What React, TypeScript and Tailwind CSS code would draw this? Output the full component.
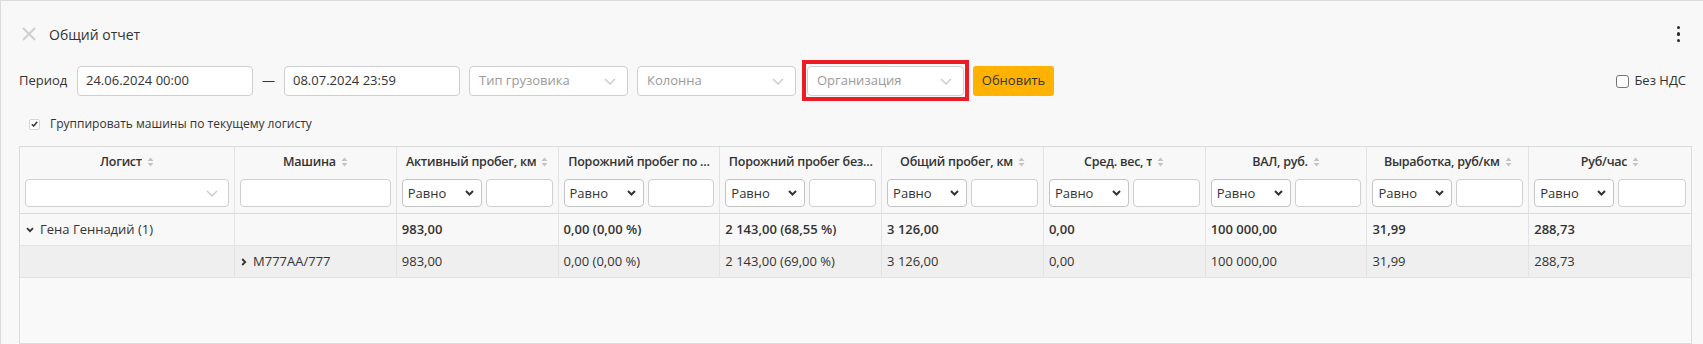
import React from "react";

const GRID = "grid grid-cols-[215px_repeat(9,minmax(0,1fr))]";

type Col = { title: string; sort: boolean; filter: "combo" | "text" | "num" };

const COLUMNS: Col[] = [
  { title: "Логист", sort: true, filter: "combo" },
  { title: "Машина", sort: true, filter: "text" },
  { title: "Активный пробег, км", sort: true, filter: "num" },
  { title: "Порожний пробег по ...", sort: false, filter: "num" },
  { title: "Порожний пробег без...", sort: false, filter: "num" },
  { title: "Общий пробег, км", sort: true, filter: "num" },
  { title: "Сред. вес, т", sort: true, filter: "num" },
  { title: "ВАЛ, руб.", sort: true, filter: "num" },
  { title: "Выработка, руб/км", sort: true, filter: "num" },
  { title: "Руб/час", sort: true, filter: "num" },
];

const VALUES = ["983,00", "0,00 (0,00 %)", "2 143,00 (68,55 %)", "3 126,00", "0,00", "100 000,00", "31,99", "288,73"];
const VALUES_CAR = ["983,00", "0,00 (0,00 %)", "2 143,00 (69,00 %)", "3 126,00", "0,00", "100 000,00", "31,99", "288,73"];

function SortIcon() {
  return (
    <svg width="7" height="10" viewBox="0 0 7 10" className="ml-[5px] shrink-0">
      <path d="M3.5 0.5L6.5 4H0.5Z" fill="#c4c4c4" />
      <path d="M0.5 6H6.5L3.5 9.5Z" fill="#c4c4c4" />
    </svg>
  );
}

function ThinChevron() {
  return (
    <svg width="12" height="7" viewBox="0 0 12 7">
      <path d="M1 1l5 5 5-5" stroke="#c9c9c9" strokeWidth="1.3" fill="none" />
    </svg>
  );
}

function BoldChevron() {
  return (
    <svg width="9" height="6" viewBox="0 0 9 6">
      <path d="M1 1l3.5 3.5L8 1" stroke="#333" strokeWidth="2" fill="none" />
    </svg>
  );
}

function PlaceholderSelect({ label, width }: { label: string; width: string }) {
  return (
    <div className={`${width} h-[30px] flex items-center justify-between bg-white border border-[#cfcfcf] rounded-[4px] pl-[9px] pr-[11px]`}>
      <span className="text-[13px] text-[#9a9a9a]">{label}</span>
      <ThinChevron />
    </div>
  );
}

function HeaderFilter({ kind }: { kind: Col["filter"] }) {
  if (kind === "combo") {
    return (
      <div className="h-[28px] flex items-center justify-end bg-white border border-[#cfcfcf] rounded-[4px] pr-[10px]">
        <ThinChevron />
      </div>
    );
  }
  if (kind === "text") {
    return <div className="h-[28px] bg-white border border-[#cfcfcf] rounded-[4px]" />;
  }
  return (
    <div className="h-[28px] flex gap-[4px]">
      <div className="w-[80px] shrink-0 flex items-center justify-between bg-white border border-[#c4c4c4] rounded-[4px] pl-[5px] pr-[7px]">
        <span className="text-[13px] text-[#333] pt-[2px]">Равно</span>
        <BoldChevron />
      </div>
      <div className="flex-1 min-w-0 bg-white border border-[#cfcfcf] rounded-[4px]" />
    </div>
  );
}

export default function App() {
  return (
    <div className="h-screen overflow-hidden flex flex-col bg-[#f8f8f8] border-t border-l border-[#dcdcdc] text-[#333] font-['Open_Sans',sans-serif]">
      <div className="flex items-center h-[28px] mt-[19px] pl-[21px] pr-[23px]">
        <svg width="14" height="14" viewBox="0 0 14 14">
          <path d="M1 1L13 13M13 1L1 13" stroke="#cfcfcf" strokeWidth="2" />
        </svg>
        <span className="ml-[13px] text-[14px]">Общий отчет</span>
        <div className="ml-auto flex flex-col gap-[3px]">
          <span className="w-[3.5px] h-[3.5px] rounded-full bg-[#2a2a2a]" />
          <span className="w-[3.5px] h-[3.5px] rounded-full bg-[#2a2a2a]" />
          <span className="w-[3.5px] h-[3.5px] rounded-full bg-[#2a2a2a]" />
        </div>
      </div>

      <div className="flex items-center h-[30px] mt-[18px] pl-[18px] pr-[17px]">
        <span className="w-[49px] text-[13px]">Период</span>
        <div className="ml-[9px] w-[176px] h-[30px] flex items-center bg-white border border-[#cfcfcf] rounded-[4px] pl-[8px] text-[13px]">
          24.06.2024 00:00
        </div>
        <span className="w-[31px] text-center text-[13px]">—</span>
        <div className="w-[176px] h-[30px] flex items-center bg-white border border-[#cfcfcf] rounded-[4px] pl-[8px] text-[13px]">
          08.07.2024 23:59
        </div>
        <div className="ml-[9px]">
          <PlaceholderSelect label="Тип грузовика" width="w-[159px]" />
        </div>
        <div className="ml-[9px]">
          <PlaceholderSelect label="Колонна" width="w-[159px]" />
        </div>
        <div className="ml-[11px] relative">
          <PlaceholderSelect label="Организация" width="w-[157px]" />
          <div className="absolute -left-[5px] -right-[5px] -top-[6px] -bottom-[5px] border-[4px] border-[#ed1c24]" />
        </div>
        <button className="ml-[9px] w-[81px] h-[30px] bg-[#ffb300] rounded-[3px] text-[13px] text-[#333]">Обновить</button>
        <label className="ml-auto flex items-center gap-[5px] text-[13px]">
          <span className="w-[13px] h-[13px] bg-white border border-[#767676] rounded-[3px]" />
          Без НДС
        </label>
      </div>

      <div className="flex items-center h-[20px] mt-[18px] pl-[28px]">
        <span className="w-[11px] h-[11px] flex items-center justify-center bg-white border border-[#d6d6d6] rounded-[2px]">
          <svg width="7" height="6" viewBox="0 0 7 6">
            <path d="M0.8 3.2L2.7 5L6.2 0.8" stroke="#333" strokeWidth="1.5" fill="none" />
          </svg>
        </span>
        <span className="ml-[10px] text-[12px]">Группировать машины по текущему логисту</span>
      </div>

      <div className="mt-[12px] ml-[18px] mr-[11px] flex-1 flex flex-col border border-[#dcdcdc] bg-[#f9f9f9]">
        <div className={`${GRID} border-b border-[#dcdcdc] bg-[#f8f8f8]`}>
          {COLUMNS.map((c) => (
            <div key={c.title} className="flex flex-col px-[5px] pt-[4px] pb-[6px] border-r border-[#e3e3e3] last:border-r-0 min-w-0">
              <div className="h-[22px] flex items-center justify-center min-w-0">
                <span className="whitespace-nowrap overflow-hidden text-[12.5px] tracking-[-0.25px] font-semibold text-[#333]">{c.title}</span>
                {c.sort ? <SortIcon /> : null}
              </div>
              <div className="mt-[6px]">
                <HeaderFilter kind={c.filter} />
              </div>
            </div>
          ))}
        </div>

        <div className={`${GRID} h-[32px] border-b border-[#e3e3e3] bg-[#f8f8f8] text-[13px] font-semibold`}>
          <div className="flex items-center pl-[6px] border-r border-[#e3e3e3]">
            <svg width="8" height="6" viewBox="0 0 8 6" className="mr-[6px]">
              <path d="M1 1.2l3 3 3-3" stroke="#333" strokeWidth="1.8" fill="none" />
            </svg>
            <span className="font-normal">Гена Геннадий (1)</span>
          </div>
          <div className="border-r border-[#e3e3e3]" />
          {VALUES.map((v, i) => (
            <div key={i} className="flex items-center pl-[5px] border-r border-[#e3e3e3] last:border-r-0">
              {v}
            </div>
          ))}
        </div>

        <div className={`${GRID} h-[32px] border-b border-[#e3e3e3] bg-[#efefef] text-[13px]`}>
          <div className="border-r border-[#e3e3e3]" />
          <div className="flex items-center pl-[6px] border-r border-[#e3e3e3]">
            <svg width="6" height="8" viewBox="0 0 6 8" className="mr-[6px]">
              <path d="M1.2 1l3 3-3 3" stroke="#333" strokeWidth="1.8" fill="none" />
            </svg>
            <span>M777AA/777</span>
          </div>
          {VALUES_CAR.map((v, i) => (
            <div key={i} className="flex items-center pl-[5px] border-r border-[#e3e3e3] last:border-r-0">
              {v}
            </div>
          ))}
        </div>
      </div>
    </div>
  );
}
